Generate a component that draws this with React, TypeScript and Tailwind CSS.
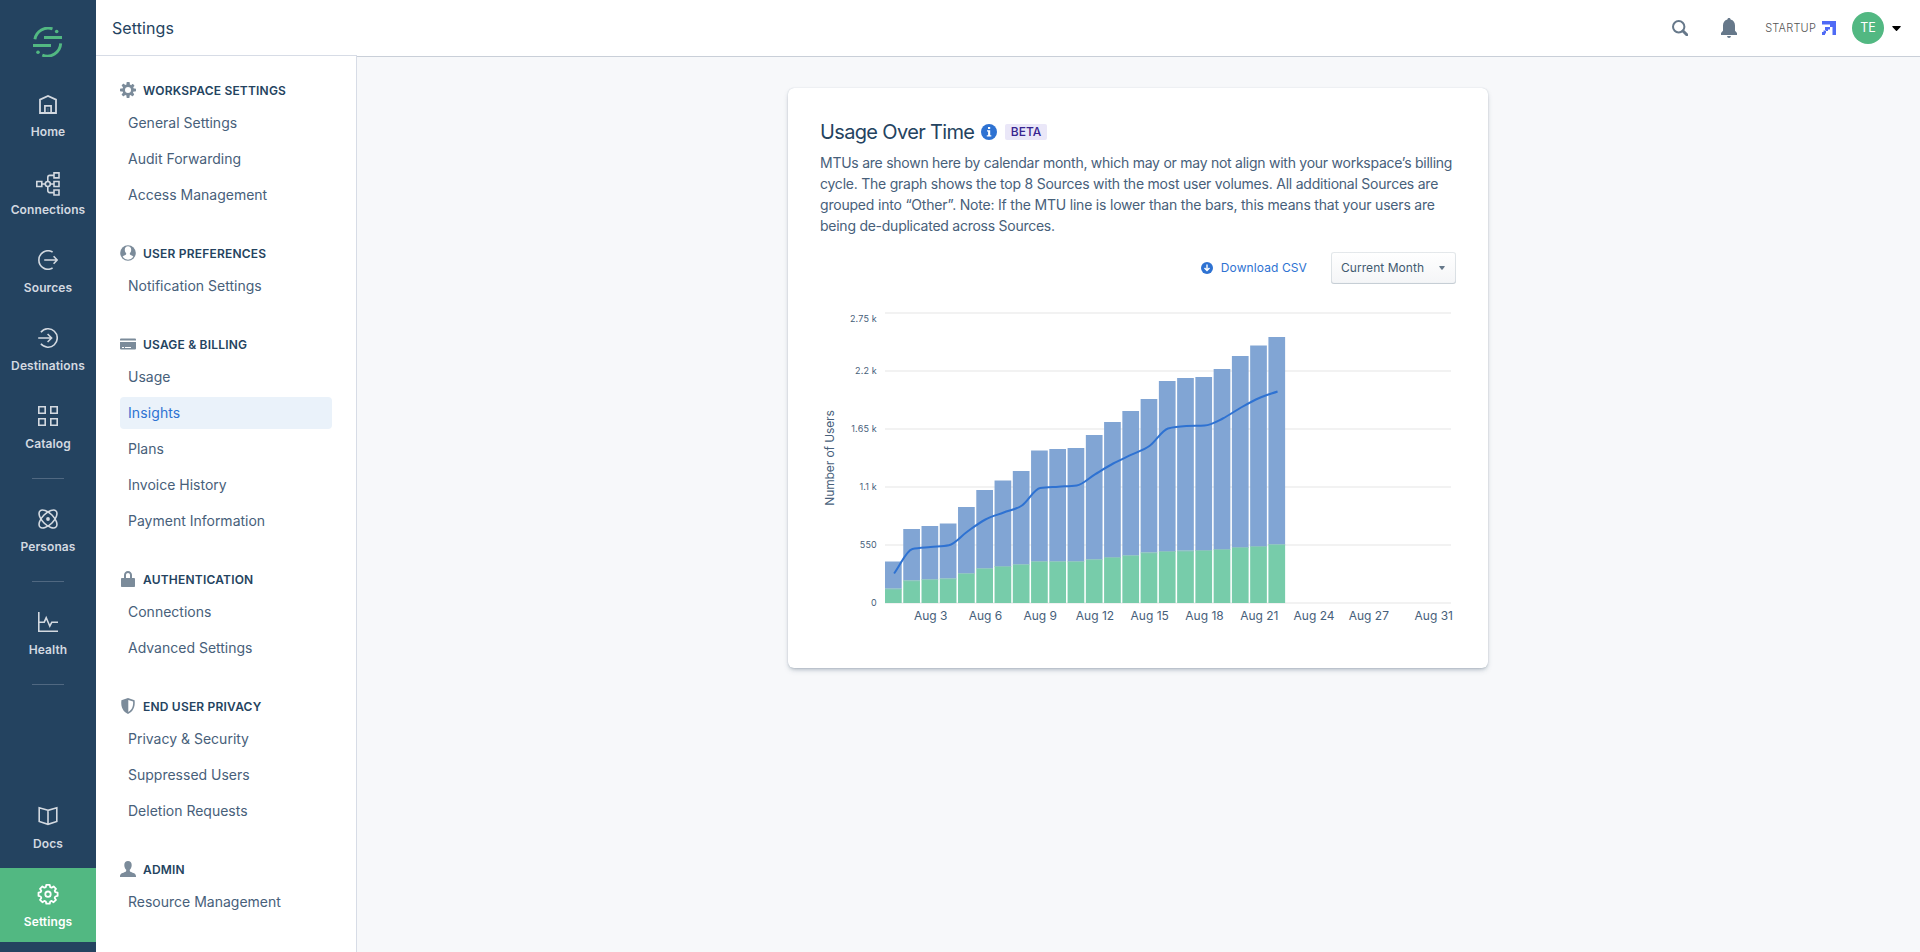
import React from "react";

type IconProps = { children: React.ReactNode; size?: number; className?: string; box?: string };

function Svg({ children, size = 20, className = "", box }: IconProps) {
  return (
    <svg
      width={size}
      height={size}
      viewBox={box ?? `0 0 ${size} ${size}`}
      fill="none"
      className={`shrink-0 ${className}`}
    >
      {children}
    </svg>
  );
}

const stroke = { stroke: "currentColor", strokeWidth: 1.6 };

const HomeIcon = (
  <Svg>
    <path d="M2 19V5.700L10 2l8 3.700V19z" stroke="currentColor" strokeWidth="1.800" />
    <path d="M6.900 19v-7.200h6.200V19" stroke="currentColor" strokeWidth="1.700" />
    <path d="M10 14v4.500" stroke="currentColor" strokeWidth="1" opacity=".3" />
  </Svg>
);
const ConnectionsIcon = (
  <Svg size={24} className="mt-1">
    <path d="M.8 9.500h5v5h-5zM18 .9h5v5h-5zM18 9.500h5v5h-5zM18 18h5v5h-5z" {...stroke} />
    <circle cx="11.800" cy="12" r="2.500" {...stroke} />
    <path d="M5.800 12h3.500M14.300 12H18M11.800 9.500V5.400q0-2 2-2H18M11.800 14.500v4.100q0 2 2 2H18" {...stroke} />
  </Svg>
);
const SourcesIcon = (
  <Svg>
    <path d="M14.600 2A9.200 9.200 0 1 0 14.600 18M6.200 10h12.600M15.600 6.200l3.600 3.800-3.600 3.800" {...stroke} />
  </Svg>
);
const DestinationsIcon = (
  <Svg>
    <path d="M2.900 4.200a9.200 9.200 0 1 1 0 11.600M.2 10h13.200M9.600 6l4 4-4 4" {...stroke} />
  </Svg>
);
const CatalogIcon = (
  <Svg>
    <path d="M.8.8h6.400v6.400H.8zM12.800.8h6.400v6.400h-6.400zM.8 12.800h6.400v6.400H.8zM12.800 12.800h6.400v6.400h-6.400z" {...stroke} />
  </Svg>
);
const PersonasIcon = (
  <Svg>
    <ellipse cx="10" cy="10" rx="11.300" ry="5.600" transform="rotate(45 10 10)" {...stroke} />
    <ellipse cx="10" cy="10" rx="11.300" ry="5.600" transform="rotate(-45 10 10)" {...stroke} />
    <circle cx="10" cy="10" r="1.900" fill="currentColor" />
  </Svg>
);
const HealthIcon = (
  <Svg>
    <path d="M.8 0v19.200H20" {...stroke} />
    <path d="M.8 10.200h5.400l2-4.400 3.600 8.400 2-4H20" {...stroke} />
  </Svg>
);
const DocsIcon = (
  <Svg>
    <path d="M10 4.300 1.200 1.800v13.600L10 18.300l8.800-2.900V1.800zM10 4.300v14" {...stroke} />
  </Svg>
);
const SettingsIcon = (
  <Svg size={22}>
    <path
      d="M9.300 1.800h3.400l.5 2.300 1.400.6 2-1.300 2.400 2.400-1.300 2 .6 1.400 2.300.5v3.200l-2.300.6-.6 1.400 1.300 2-2.400 2.300-2-1.300-1.400.6-.5 2.200H9.300l-.5-2.200-1.400-.6-2 1.300L3 16.900l1.300-2-.6-1.400-2.200-.6V9.700l2.200-.5.6-1.400-1.300-2 2.400-2.400 2 1.300 1.400-.6z"
      stroke="currentColor"
      strokeWidth="1.800"
      strokeLinejoin="round"
    />
    <circle cx="11" cy="11.200" r="2.700" stroke="currentColor" strokeWidth="1.800" />
  </Svg>
);

function RailItem({ icon, label, active }: { icon: React.ReactNode; label: string; active?: boolean }) {
  return (
    <a
      className={`flex h-[74px] w-full shrink-0 flex-col items-center ${
        active ? "bg-[#52b882] text-white" : "text-[#d3d9e0]"
      }`}
    >
      <span className="mt-[14px] flex h-6 items-center justify-center">{icon}</span>
      <span className="mt-[8px] text-[12px] leading-4 font-semibold tracking-[0.1px]">{label}</span>
    </a>
  );
}

const Divider = () => <div className="my-[14px] h-px w-8 shrink-0 bg-[#506881]" />;

function Rail() {
  return (
    <nav className="flex w-24 shrink-0 flex-col items-center bg-[#244360] pb-[10px]">
      <div className="flex h-[78px] shrink-0 items-center pt-[6px]">
        <Svg size={30} className="text-[#52b882]">
          <g stroke="currentColor" strokeWidth="2.900">
            <path d="M19.500 1.900A13.400 13.400 0 0 0 1.900 12.200M27.700 16.400A13.400 13.400 0 0 1 9.300 28.100" />
            <path d="M11 10.500H29M0 18.500h18" />
          </g>
          <circle cx="23.700" cy="4.500" r="1.800" fill="currentColor" />
          <circle cx="5" cy="25.200" r="1.800" fill="currentColor" />
        </Svg>
      </div>
      <div className="flex w-full flex-col gap-1">
        <RailItem icon={HomeIcon} label="Home" />
        <RailItem icon={ConnectionsIcon} label="Connections" />
        <RailItem icon={SourcesIcon} label="Sources" />
        <RailItem icon={DestinationsIcon} label="Destinations" />
        <RailItem icon={CatalogIcon} label="Catalog" />
      </div>
      <Divider />
      <RailItem icon={PersonasIcon} label="Personas" />
      <Divider />
      <RailItem icon={HealthIcon} label="Health" />
      <Divider />
      <div className="mt-auto flex w-full flex-col gap-1">
        <RailItem icon={DocsIcon} label="Docs" />
        <RailItem icon={SettingsIcon} label="Settings" active />
      </div>
    </nav>
  );
}

const CogIcon = (
  <Svg size={16}>
    <path
      fillRule="evenodd"
      fill="currentColor"
      d="M15.200 6.500h-1.500c-.1-.4-.3-.8-.5-1.200l1-1c.3-.3.3-.8 0-1.100l-1-1c-.3-.3-.8-.3-1.100 0l-1 1c-.4-.3-.8-.4-1.300-.6V.8c0-.5-.3-.8-.8-.8H7.300c-.5 0-.8.3-.8.8v1.800c-.4.1-.8.3-1.200.5L4 1.900c-.3-.3-.8-.3-1.100 0l-1 1c-.3.300-.3.800 0 1.100l1.200 1.200c-.2.400-.4.800-.5 1.300H.8c-.5 0-.8.3-.8.800v1.500c0 .5.3.8.800.8h1.800c.1.400.3.800.5 1.200L1.900 12c-.3.300-.3.800 0 1.100l1 1c.3.300.8.300 1.100 0l1.200-1.200c.4.200.8.400 1.300.5v1.800c0 .5.300.8.800.8h1.500c.5 0 .8-.3.800-.8v-1.800c.4-.1.800-.3 1.200-.5l1 1c.300.3.8.3 1.100 0l1-1c.300-.3.300-.8 0-1.100l-1-1c.3-.4.400-.8.600-1.300h1.700c.5 0 .8-.3.800-.8V7.300c0-.5-.3-.8-.8-.8zM8 11a3 3 0 1 1 0-6 3 3 0 0 1 0 6z"
    />
  </Svg>
);
const UserCircleIcon = (
  <Svg size={16}>
    <circle cx="8" cy="8" r="7.800" fill="currentColor" />
    <path
      fill="#fff"
      d="M8 1.200c-2 0-3.200 1.400-3.200 3.500 0 1.300.5 2.600 1.300 3.400.2.800 0 1.300-.4 1.700-.9.600-2.300.9-3.100 2A6.700 6.700 0 0 0 8 14.700a6.700 6.700 0 0 0 5.400-2.900c-.8-1.100-2.200-1.400-3.100-2-.4-.4-.6-.9-.4-1.700.8-.8 1.300-2.100 1.300-3.400C11.200 2.600 10 1.200 8 1.200z"
    />
  </Svg>
);
const CardIcon = (
  <Svg size={16}>
    <path
      fillRule="evenodd"
      fill="currentColor"
      d="M1 2.500h14q1 0 1 1V4.500H0v-1q0-1 1-1zM0 6h16v6.500q0 1-1 1H1q-1 0-1-1zm2 5v1h2v-1zm3 0v1h6v-1z"
    />
  </Svg>
);
const LockIcon = (
  <Svg size={16}>
    <path
      fillRule="evenodd"
      fill="currentColor"
      d="M14 7h-2V4c0-2.200-1.800-4-4-4S4 1.800 4 4v3H2c-.6 0-1 .5-1 1v7c0 .6.4 1 1 1h12c.6 0 1-.4 1-1V8c0-.5-.4-1-1-1zm-4 0H6V4c0-1.100.9-2 2-2s2 .9 2 2z"
    />
  </Svg>
);
const ShieldIcon = (
  <Svg size={16}>
    <path
      fillRule="evenodd"
      fill="currentColor"
      d="M8 0 14.600 2.300C15.500 9.500 12.500 14 8 16 3.500 14 .5 9.500 1.400 2.300zM8.300 2V14c3.200-1.800 5.100-5 4.800-10.500z"
    />
  </Svg>
);
const PersonIcon = (
  <Svg size={16}>
    <path
      fill="currentColor"
      d="M8 0C5.800 0 4.300 1.600 4.300 4c0 2 .8 3.800 1.900 4.800.2 1.200-.2 1.800-1.200 2.300-1.800.9-5 1.300-5 4.200V16h16v-.7c0-2.900-3.200-3.300-5-4.200-1-.5-1.400-1.100-1.200-2.300 1.100-1 1.900-2.800 1.900-4.800C11.700 1.600 10.200 0 8 0z"
    />
  </Svg>
);

const sections = [
  { icon: CogIcon, title: "WORKSPACE SETTINGS", items: ["General Settings", "Audit Forwarding", "Access Management"] },
  { icon: UserCircleIcon, title: "USER PREFERENCES", items: ["Notification Settings"] },
  {
    icon: CardIcon,
    title: "USAGE & BILLING",
    items: ["Usage", "Insights", "Plans", "Invoice History", "Payment Information"],
  },
  { icon: LockIcon, title: "AUTHENTICATION", items: ["Connections", "Advanced Settings"] },
  { icon: ShieldIcon, title: "END USER PRIVACY", items: ["Privacy & Security", "Suppressed Users", "Deletion Requests"] },
  { icon: PersonIcon, title: "ADMIN", items: ["Resource Management"] },
];

function Sidebar() {
  return (
    <aside className="flex w-[261px] shrink-0 flex-col gap-[34px] border-r border-[#d7dce6] bg-white pt-[26px] pr-6 pl-6">
      {sections.map((s) => (
        <section key={s.title}>
          <h2 className="mb-[9px] flex h-4 items-center gap-[7px] text-[#7b8b9a]">
            {s.icon}
            <span className="mt-[2px] text-[12px] leading-4 font-semibold tracking-[0.2px] text-[#244360]">{s.title}</span>
          </h2>
          <ul className="flex flex-col gap-1">
            {s.items.map((item) => (
              <li
                key={item}
                className={`flex h-8 items-center rounded px-2 pb-[2px] text-[14px] ${
                  item === "Insights" ? "bg-[#eaf2fa] tracking-[0.1px] text-[#2e72d2]" : "text-[#47607a]"
                }`}
              >
                {item}
              </li>
            ))}
          </ul>
        </section>
      ))}
    </aside>
  );
}

function TopBar() {
  return (
    <header className="flex h-14 shrink-0 items-center bg-white pr-[19px] pl-4">
      <h1 className="text-[16px] font-normal tracking-[0.1px] text-[#244360]">Settings</h1>
      <div className="ml-auto flex items-center">
        <Svg size={16} className="mr-[31px] text-[#66788a]">
          <circle cx="6.700" cy="6.700" r="5.700" stroke="currentColor" strokeWidth="2" />
          <path d="m11 11 3.800 3.800" stroke="currentColor" strokeWidth="3" strokeLinecap="round" />
        </Svg>
        <Svg size={20} className="mr-[26px] text-[#66788a]">
          <path
            fill="currentColor"
            d="M10 0c-1 0-1.600.6-1.600 1.500C5.500 2.200 4 4.500 4 7.500v5.300L2 15v2h16v-2l-2-2.200V7.500c0-3-1.500-5.300-4.400-6C11.600.6 11 0 10 0zM8 18h4q-.3 2-2 2t-2-2z"
          />
        </Svg>
        <span className="text-[11px] font-light tracking-[0.2px] text-[#555]">STARTUP</span>
        <Svg size={14} className="mr-4 ml-[6px]">
          <path
            fill="#4f6bf5"
            d="M0 0h14v14h-3.500V6H8v2.500H6V10H4v2.500H3V14H0v-3h1.500V9.500H4V8h2V6h2V3.500H0z"
          />
          <path fill="#4f6bf5" d="M3 6h3v3H3z" />
        </Svg>
        <span className="flex size-8 items-center justify-center rounded-full bg-[#52b882] text-[12.5px] text-white">
          TE
        </span>
        <Svg size={9} className="ml-2" box="0 0 9 6">
          <path fill="#000" d="M.5.500h8Q9 1 8.500 1.500L5 5.200q-.5.500-1 0L.5 1.500Q0 1 .5.500z" />
        </Svg>
      </div>
    </header>
  );
}

const totals = [
  561.5, 529, 526, 523.5, 507, 490, 480.5, 471, 450.5, 449, 448, 435, 422, 411, 399, 381, 378, 377, 369, 356, 345.5, 337,
];
const greens = [
  588.7, 580.5, 579.3, 578.5, 573.3, 568.3, 566, 564.3, 561.3, 561.3, 561.3, 559.3, 557, 555.3, 552.5, 551, 550.7, 550,
  549, 547, 546, 544.3,
];
const mtu = [
  573.5, 549, 547, 545.2, 531.7, 519.5, 512.5, 505.5, 488, 486.7, 485.5, 474.3, 463.5, 454.7, 445.7, 428.5, 426, 425.5,
  418.5, 407.5, 398, 391.5,
];
const TOP = 300;
const LEFT = 85;
const STEP = 566 / 31;
const yLabels = ["2.75 k", "2.2 k", "1.65 k", "1.1 k", "550", "0"];
const xLabels = [3, 6, 9, 12, 15, 18, 21, 24, 27];

function monotonePath(ys: number[]) {
  const pts = ys.map((y, i) => [LEFT + STEP * (i + 0.5), y - TOP]);
  const n = pts.length;
  const d = pts.slice(1).map((p, i) => (p[1] - pts[i][1]) / STEP);
  const m = pts.map((_, i) => {
    if (i === 0) return d[0];
    if (i === n - 1) return d[n - 2];
    if (d[i - 1] * d[i] <= 0) return 0;
    const mean = (d[i - 1] + d[i]) / 2;
    return Math.sign(mean) * Math.min(Math.abs(mean), 2 * Math.abs(d[i - 1]), 2 * Math.abs(d[i]));
  });
  return pts
    .map((p, i) => {
      if (i === 0) return `M${p[0]},${p[1]}`;
      const q = pts[i - 1];
      const h = STEP / 3;
      return `C${q[0] + h},${q[1] + m[i - 1] * h} ${p[0] - h},${p[1] - m[i] * h} ${p[0]},${p[1]}`;
    })
    .join("");
}

function UsageChart() {
  return (
    <svg width="668" height="330" viewBox="0 0 668 330" className="block">
      {yLabels.map((label, i) => (
        <g key={label}>
          <rect x={LEFT} y={12 + i * 58} width="566" height="2" fill="#f2f2f2" />
          <text
            x="77"
            y={(i === 0 ? 19 : 13 + i * 58) + 3}
            textAnchor="end"
            className="fill-[#47607a] text-[9px] tracking-[0.2px]"
          >
            {label}
          </text>
        </g>
      ))}
      <text
        transform="translate(34 158) rotate(-90)"
        textAnchor="middle"
        className="fill-[#47607a] text-[12px] tracking-[-0.1px]"
      >
        Number of Users
      </text>
      {totals.map((t, i) => (
        <g key={i}>
          <rect x={LEFT + STEP * i} y={t - TOP} width="16.700" height={greens[i] - t} fill="#81a5d4" />
          <rect x={LEFT + STEP * i} y={greens[i] - TOP} width="16.700" height={603 - greens[i]} fill="#77ccaa" />
          <rect x={LEFT + STEP * i} y={greens[i] - TOP} width="16.700" height="0.800" fill="#8fc0c4" />
        </g>
      ))}
      <path d={monotonePath(mtu)} fill="none" stroke="#2e72d2" strokeWidth="2" />
      {xLabels.map((n) => (
        <text
          key={n}
          x={LEFT + STEP * (n - 0.5)}
          y="320"
          textAnchor="middle"
          className="fill-[#47607a] text-[12px]"
        >
          {`Aug ${n}`}
        </text>
      ))}
      <text x="653" y="320" textAnchor="end" className="fill-[#47607a] text-[12px]">
        Aug 31
      </text>
    </svg>
  );
}

function UsageCard() {
  return (
    <section className="flex h-[580px] w-[700px] flex-col rounded-[6px] bg-white shadow-[0_0_1px_rgba(67,90,111,0.3),0_2px_4px_-2px_rgba(67,90,111,0.4),0_3px_6px_-2px_rgba(67,90,111,0.3)]">
      <div className="flex items-center px-8 pt-[32px]">
        <h2 className="w-[153px] text-[20px] leading-6 font-normal tracking-[-0.65px] whitespace-nowrap text-[#244360]">
          Usage Over Time
        </h2>
        <Svg size={16} className="ml-2">
          <circle cx="8" cy="8" r="8" fill="#2e72d2" />
          <path fill="#fff" d="M7 3h2.200v2H7zM6 6.200h3.200v5h1.100v1.300H5.800v-1.300h1.300V7.500H6z" />
        </Svg>
        <span className="ml-2 flex h-4 w-[42px] items-center justify-center rounded-[2px] bg-[#eae7f8] text-[12px] font-medium text-[#37248f]">
          BETA
        </span>
      </div>
      <p className="mt-[8px] w-[650px] pl-8 text-[14px] leading-[21px] tracking-[-0.255px] whitespace-nowrap text-[#47607a]">
        MTUs are shown here by calendar month, which may or may not align with your workspace’s billing
        <br />
        <span className="tracking-[-0.23px]">
          cycle. The graph shows the top 8 Sources with the most user volumes. All additional Sources are
        </span>
        <br />
        <span className="tracking-[-0.2px]">
          grouped into “Other”. Note: If the MTU line is lower than the bars, this means that your users are
        </span>
        <br />
        being de-duplicated across Sources.
      </p>
      <div className="mt-4 flex h-8 items-center justify-end pr-8">
        <a className="mr-6 flex items-center gap-2 text-[12px] font-normal tracking-[0.1px] text-[#2e72d2]">
          <Svg size={12}>
            <circle cx="6" cy="6" r="6" fill="#2e72d2" />
            <path d="M6 2.500v6M3.500 6 6 8.600 8.500 6" stroke="#fff" strokeWidth="1.400" />
          </Svg>
          Download CSV
        </a>
        <button className="flex h-8 w-[125px] items-center justify-between rounded-[3px] bg-linear-to-b from-white to-[#f4f5f7] pr-[11px] pl-[10px] text-[12px] font-normal tracking-[0.05px] text-[#425a70] shadow-[inset_0_0_0_1px_rgba(67,90,111,0.14),inset_0_-1px_1px_0_rgba(67,90,111,0.14)]">
          Current Month
          <svg width="6" height="4" viewBox="0 0 7 5">
            <path fill="#66788a" d="M.5 0h6q.8.300.3 1L4 4.600q-.5.400-1 0L.2 1Q-.3.300.5 0z" />
          </svg>
        </button>
      </div>
      <div className="mt-4 pl-3">
        <UsageChart />
      </div>
    </section>
  );
}

export default function App() {
  return (
    <div className="flex h-[952px] w-full overflow-hidden bg-[#f7f8fa] font-['Inter','Liberation_Sans',sans-serif] antialiased">
      <Rail />
      <div className="flex min-w-0 flex-1 flex-col">
        <TopBar />
        <div className="flex min-h-0 flex-1">
          <div className="-mt-px flex border-t border-[#d7dce6]">
            <Sidebar />
          </div>
          <main className="flex flex-1 justify-center border-t border-[#c9cfd8] pt-[31px] pr-px">
            <UsageCard />
          </main>
        </div>
      </div>
    </div>
  );
}
